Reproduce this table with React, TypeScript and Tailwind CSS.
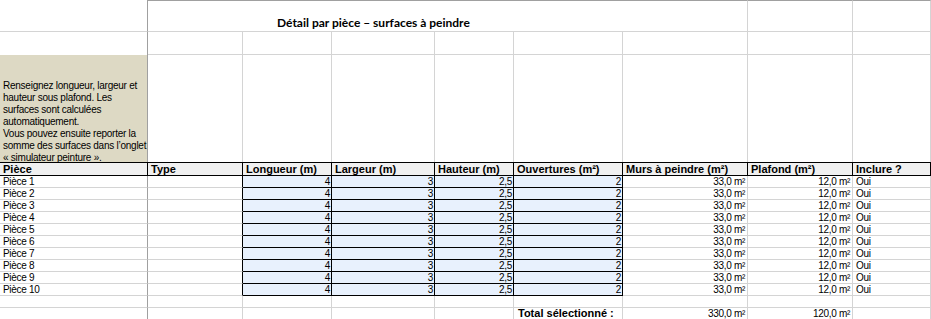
import React from 'react';

const rows = Array.from({ length: 10 }, (_, i) => `Pièce ${i + 1}`);

const note = [
    'Renseignez longueur, largeur et',
    'hauteur sous plafond. Les',
    'surfaces sont calculées',
    'automatiquement.',
    'Vous pouvez ensuite reporter la',
    'somme des surfaces dans l’onglet',
    '« simulateur peinture ».',
];

const txt = 'text-[10px] leading-[11px] tracking-[-0.3px] whitespace-nowrap';
const hd = 'text-[11px] leading-[12px] font-bold whitespace-nowrap px-[3px] bg-[#f0f0f0] border-t border-b border-r border-black flex items-center';

const App: React.FC = () => {
    return (
        <div className="w-[931px] h-[319px] overflow-hidden bg-white text-black font-['Liberation_Sans',Arial,sans-serif]">
            <div className="grid grid-cols-[148px_95px_89px_103px_79px_109px_125px_105px_78px] grid-rows-[32px_23px_107px_14px_repeat(10,12px)_12px_12px]">
                {/* row 1: title */}
                <div className="border-r border-r-[#a0a0a0] border-b border-b-[#d4d4d4]" />
                <div className="col-span-6 border-t border-t-[#a0a0a0] border-r border-r-[#d4d4d4] border-b border-b-[#d4d4d4] flex items-end pl-[129px] pb-[1px]">
                    <span className="font-['Lato',sans-serif] font-bold text-[12px] leading-[14px] whitespace-nowrap">
                        Détail par pièce – surfaces à peindre
                    </span>
                </div>
                <div className="border-t border-t-[#a0a0a0] border-r border-b border-[#d4d4d4]" />
                <div className="border-t border-t-[#a0a0a0] border-r border-b border-[#d4d4d4]" />

                {/* row 2 */}
                <div className="border-r border-r-[#a0a0a0]" />
                {Array.from({ length: 8 }, (_, i) => (
                    <div key={`r2-${i}`} className="border-r border-b border-[#d4d4d4]" />
                ))}

                {/* row 3: note */}
                <div className="bg-[#ddd9c4] border-r border-r-[#a0a0a0] flex flex-col justify-end pl-[3px] -mb-[2px] relative z-10">
                    {note.map((l) => (
                        <div key={l} className="text-[10px] leading-[12px] tracking-[-0.25px] whitespace-nowrap">
                            {l}
                        </div>
                    ))}
                </div>
                {Array.from({ length: 8 }, (_, i) => (
                    <div key={`r3-${i}`} className="border-r border-[#d4d4d4]" />
                ))}

                {/* header */}
                <div className={`${hd} relative z-20`}>Pièce</div>
                <div className={hd}>Type</div>
                <div className={hd}>Longueur (m)</div>
                <div className={hd}>Largeur (m)</div>
                <div className={hd}>Hauteur (m)</div>
                <div className={hd}>Ouvertures (m²)</div>
                <div className={hd}>Murs à peindre (m²)</div>
                <div className={hd}>Plafond (m²)</div>
                <div className={hd}>Inclure ?</div>

                {/* data */}
                {rows.map((name) => (
                    <React.Fragment key={name}>
                        <div className={`${txt} pl-[3px] border-r border-r-[#a0a0a0] border-b border-b-[#d4d4d4]`}>{name}</div>
                        <div className="border-r border-r-black border-b border-b-[#d4d4d4]" />
                        <div className={`${txt} text-right pr-[1px] bg-[#e8f1fd] border-r border-b border-black`}>4</div>
                        <div className={`${txt} text-right pr-[1px] bg-[#e8f1fd] border-r border-b border-black`}>3</div>
                        <div className={`${txt} text-right pr-[1px] bg-[#e8f1fd] border-r border-b border-black`}>2,5</div>
                        <div className={`${txt} text-right pr-[1px] bg-[#e8f1fd] border-r border-b border-black`}>2</div>
                        <div className={`${txt} text-right pr-[2px] border-r border-b border-[#d4d4d4]`}>33,0 m²</div>
                        <div className={`${txt} text-right pr-[2px] border-r border-b border-[#d4d4d4]`}>12,0 m²</div>
                        <div className={`${txt} pl-[3px] border-r border-b border-[#d4d4d4]`}>Oui</div>
                    </React.Fragment>
                ))}

                {/* empty row */}
                <div className="border-r border-r-[#a0a0a0] border-b border-b-[#d4d4d4]" />
                {Array.from({ length: 8 }, (_, i) => (
                    <div key={`e-${i}`} className="border-r border-b border-[#d4d4d4]" />
                ))}

                {/* total row */}
                <div className="border-r border-r-[#a0a0a0] border-b border-b-[#d4d4d4]" />
                <div className="border-r border-b border-[#d4d4d4]" />
                <div className="border-r border-b border-[#d4d4d4]" />
                <div className="border-r border-b border-[#d4d4d4]" />
                <div className="border-r border-b border-[#d4d4d4]" />
                <div className="text-[11px] leading-[11px] font-bold whitespace-nowrap pl-[4px] border-r border-b border-[#d4d4d4]">
                    Total sélectionné :
                </div>
                <div className={`${txt} text-right pr-[2px] border-r border-b border-[#d4d4d4]`}>330,0 m²</div>
                <div className={`${txt} text-right pr-[2px] border-r border-b border-[#d4d4d4]`}>120,0 m²</div>
                <div className="border-r border-b border-[#d4d4d4]" />
            </div>
        </div>
    );
};

export default App;
